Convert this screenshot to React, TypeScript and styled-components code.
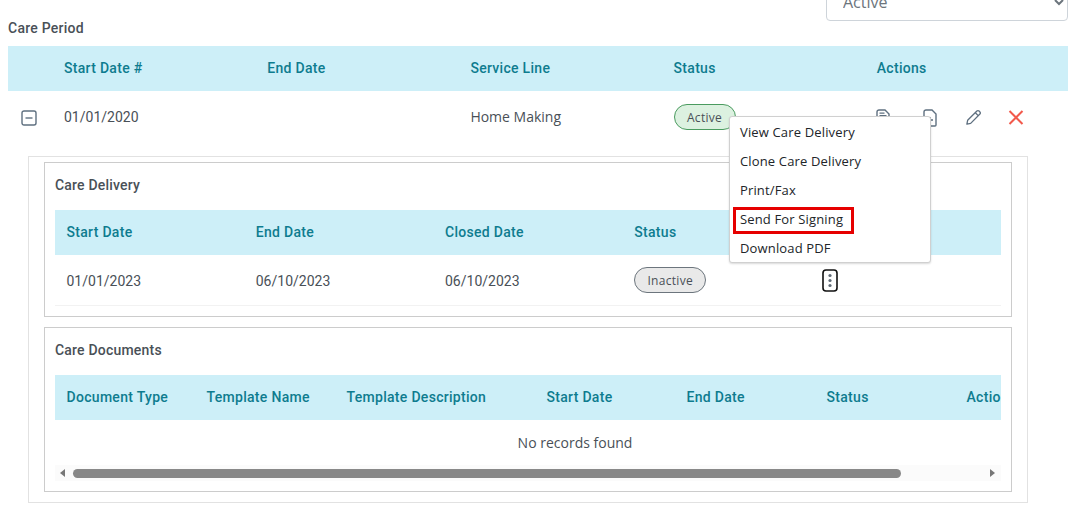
import { styled, createGlobalStyle } from 'styled-components'

const GlobalStyle = createGlobalStyle`
  html, body {
    margin: 0;
    height: 505px;
    overflow: hidden;
    background: #fff;
  }
  * {
    box-sizing: border-box;
  }
`

const Page = styled.div`
  width: 1069px;
  height: 505px;
  overflow: hidden;
  padding-left: 8px;
  font-family: Roboto, sans-serif;
  color: #495057;
`

const FilterBar = styled.div`
  display: flex;
  justify-content: flex-end;
  height: 21px;
  padding-right: 1px;
  align-items: flex-end;
`

const StatusSelect = styled.select`
  width: 242px;
  height: 38px;
  flex: none;
  padding: 0 12px;
  border: 1px solid #ced4da;
  border-radius: 4px;
  background-color: #fff;
  color: #6c757d;
  font-family: "Open Sans", sans-serif;
  font-size: 16px;
`

const PageTitle = styled.div`
  height: 25px;
  font-size: 14px;
  font-weight: 500;
  line-height: 15px;
  letter-spacing: 0.25px;
  color: #495057;
`

const PeriodHead = styled.div`
  display: grid;
  grid-template-columns: 56px repeat(5, 203.2px);
  align-items: center;
  height: 45px;
  width: 1060px;
  background: #cdeff8;
`

const HeadCell = styled.div`
  padding-bottom: 2px;
  font-size: 14px;
  font-weight: 500;
  letter-spacing: 0.3px;
  color: #0e7c8f;
  white-space: nowrap;
`

const PeriodRow = styled.div`
  position: relative;
  display: grid;
  grid-template-columns: 56px repeat(4, 203.2px) 1fr;
  align-items: center;
  height: 52px;
  width: 1060px;
  font-size: 14px;
`

const ExpandCell = styled.div`
  display: flex;
  padding: 2px 0 0 13px;
`

const SansCell = styled.div`
  padding-bottom: 2px;
  font-family: "Open Sans", sans-serif;
`

const Badge = styled.span<{ $active?: boolean }>`
  display: inline-flex;
  align-items: center;
  justify-content: center;
  height: 26px;
  width: ${p => (p.$active ? '62px' : '72px')};
  border-radius: 13px;
  border: 1px solid ${p => (p.$active ? '#4a9b5f' : '#6c757d')};
  background: ${p => (p.$active ? '#dcf1e0' : '#e9e9e9')};
  color: #495057;
  font-family: "Open Sans", sans-serif;
  font-size: 12px;
  letter-spacing: 0.3px;
`

const ActionIcons = styled.div`
  display: grid;
  grid-template-columns: 46px 43px 43px 16px;
  align-items: center;
  margin-left: -1px;
  padding-top: 1px;

  svg {
    display: block;
  }
`

const Menu = styled.ul`
  position: absolute;
  left: 721px;
  top: 25px;
  z-index: 5;
  width: 202px;
  height: 147px;
  margin: 0;
  padding: 1px 0 0;
  list-style: none;
  background: #fff;
  border: 1px solid #d0d0d0;
  border-radius: 3px;
  box-shadow: 0 1px 2px rgba(0, 0, 0, 0.15);
`

const MenuItem = styled.li`
  position: relative;
  height: 29px;
  padding-left: 10px;
  font-family: "Open Sans", sans-serif;
  font-size: 13px;
  line-height: 29px;
  letter-spacing: 0.15px;
  color: #212529;
  white-space: nowrap;
`

const Highlight = styled.span`
  position: absolute;
  left: 3px;
  top: 2px;
  width: 121px;
  height: 27px;
  border: 3px solid #e60000;
`

const OuterBox = styled.div`
  width: 1000px;
  height: 347px;
  margin: 13px 0 0 20px;
  padding: 5px 15px 0;
  border: 1px solid #e2e2e2;
  display: flex;
  flex-direction: column;
  gap: 10px;
`

const Card = styled.section<{ $height: number }>`
  height: ${p => p.$height}px;
  padding: 0 10px;
  border: 1px solid #ccc;
`

const CardTitle = styled.h3`
  height: 47px;
  margin: 0;
  font-size: 14px;
  font-weight: 500;
  line-height: 44px;
  letter-spacing: 0.2px;
  color: #495057;
`

const DeliveryHead = styled.div`
  display: grid;
  grid-template-columns: repeat(5, 189.25px);
  align-items: center;
  height: 45px;
  padding-left: 11.5px;
  background: #cdeff8;
`

const DeliveryRow = styled.div`
  display: grid;
  grid-template-columns: repeat(5, 189.25px);
  align-items: center;
  height: 51px;
  padding-left: 11.5px;
  font-size: 14px;
  border-bottom: 1px solid #f2f2f2;
`

const DateCell = styled.div`
  padding-top: 2px;
`

const KebabCell = styled.div`
  margin-left: -1.5px;

  svg {
    display: block;
  }
`

const ScrollArea = styled.div`
  overflow: hidden;
`

const DocumentsHead = styled.div`
  display: grid;
  grid-template-columns: 140px 140px 200px 140px 140px 140px 140px;
  align-items: center;
  width: 1060px;
  height: 45px;
  padding-left: 11.5px;
  background: #cdeff8;
`

const EmptyRow = styled.div`
  display: flex;
  align-items: center;
  justify-content: center;
  height: 45px;
  padding: 0 0 1px 94px;
  font-family: "Open Sans", sans-serif;
  font-size: 14px;
  color: #495057;
`

const ScrollBar = styled.div`
  display: flex;
  align-items: center;
  justify-content: space-between;
  height: 16px;
  padding: 0 6px 0 5px;
  background: #fbfbfb;
`

const ScrollThumb = styled.div`
  width: 828px;
  height: 9px;
  margin-right: 81px;
  border-radius: 5px;
  background: #888;
`

const Arrow = styled.span<{ $right?: boolean }>`
  width: 0;
  height: 0;
  border-top: 4px solid transparent;
  border-bottom: 4px solid transparent;
  ${p => (p.$right ? 'border-left: 5px solid #777;' : 'border-right: 5px solid #777;')}
`

const MinusIcon = () => (
  <svg width="16" height="16" viewBox="0 0 16 16" fill="none" stroke="#5f7080" strokeWidth="1.4">
    <rect x="1" y="1" width="14" height="14" rx="2" />
    <path d="M4.5 8h7" />
  </svg>
)

const DocIcon = () => (
  <svg width="14" height="18" viewBox="0 0 14 18" fill="none" stroke="#5f7080" strokeWidth="1.4">
    <path d="M1 16V3a2 2 0 0 1 2-2h6l4 4v11a1 1 0 0 1-1 1H2a1 1 0 0 1-1-1z" />
    <path d="M3.5 4.2h5M3.5 6.6h7" strokeWidth="1.2" />
  </svg>
)

const DocPlusIcon = () => (
  <svg width="16" height="18" viewBox="0 0 16 18" fill="none" stroke="#5f7080" strokeWidth="1.4">
    <path d="M2 16V3a2 2 0 0 1 2-2h6l4 4v11a1 1 0 0 1-1 1H3a1 1 0 0 1-1-1z" />
    <path d="M5 11h6M8 8v6" />
  </svg>
)

const PencilIcon = () => (
  <svg width="17" height="17" viewBox="0 0 18 18" fill="none" stroke="#5f7080" strokeWidth="1.4" strokeLinejoin="round">
    <path d="M2 16l.8-4L12.6 2.2a1.6 1.6 0 0 1 2.3 0l.9.9a1.6 1.6 0 0 1 0 2.3L6 15.2z" />
    <path d="M11 4l3 3" />
  </svg>
)

const CloseIcon = () => (
  <svg width="16" height="15" viewBox="0 0 16 15" fill="none" stroke="#f2594b" strokeWidth="2">
    <path d="M1.5 1l13 13M14.5 1l-13 13" />
  </svg>
)

const KebabIcon = () => (
  <svg width="16" height="23" viewBox="0 0 16 23" fill="none">
    <rect x="1" y="1" width="14" height="21" rx="3" stroke="#111" strokeWidth="1.6" />
    <circle cx="8" cy="6.5" r="1.6" fill="#5f6b76" />
    <circle cx="8" cy="11.5" r="1.6" fill="#5f6b76" />
    <circle cx="8" cy="16.5" r="1.6" fill="#5f6b76" />
  </svg>
)

const menuItems = ['View Care Delivery', 'Clone Care Delivery', 'Print/Fax', 'Send For Signing', 'Download PDF']
const deliveryColumns = ['Start Date', 'End Date', 'Closed Date', 'Status', 'Actions']
const documentColumns = ['Document Type', 'Template Name', 'Template Description', 'Start Date', 'End Date', 'Status', 'Actions']

export default function App() {
  return (
    <Page>
      <GlobalStyle />
      <FilterBar>
        <StatusSelect defaultValue="Active">
          <option>Active</option>
          <option>Inactive</option>
        </StatusSelect>
      </FilterBar>
      <PageTitle>Care Period</PageTitle>
      <PeriodHead>
        <div />
        <HeadCell>Start Date #</HeadCell>
        <HeadCell>End Date</HeadCell>
        <HeadCell>Service Line</HeadCell>
        <HeadCell>Status</HeadCell>
        <HeadCell>Actions</HeadCell>
      </PeriodHead>
      <PeriodRow>
        <ExpandCell>
          <MinusIcon />
        </ExpandCell>
        <div>01/01/2020</div>
        <div />
        <SansCell>Home Making</SansCell>
        <div>
          <Badge $active>Active</Badge>
        </div>
        <ActionIcons>
          <DocIcon />
          <DocPlusIcon />
          <PencilIcon />
          <CloseIcon />
        </ActionIcons>
        <Menu>
          {menuItems.map(item => (
            <MenuItem key={item}>
              {item}
              {item === 'Send For Signing' && <Highlight />}
            </MenuItem>
          ))}
        </Menu>
      </PeriodRow>
      <OuterBox>
        <Card $height={155}>
          <CardTitle>Care Delivery</CardTitle>
          <DeliveryHead>
            {deliveryColumns.map(col => (
              <HeadCell key={col}>{col}</HeadCell>
            ))}
          </DeliveryHead>
          <DeliveryRow>
            <DateCell>01/01/2023</DateCell>
            <DateCell>06/10/2023</DateCell>
            <DateCell>06/10/2023</DateCell>
            <div>
              <Badge>Inactive</Badge>
            </div>
            <KebabCell>
              <KebabIcon />
            </KebabCell>
          </DeliveryRow>
        </Card>
        <Card $height={165}>
          <CardTitle>Care Documents</CardTitle>
          <ScrollArea>
            <DocumentsHead>
              {documentColumns.map(col => (
                <HeadCell key={col}>{col}</HeadCell>
              ))}
            </DocumentsHead>
          </ScrollArea>
          <EmptyRow>No records found</EmptyRow>
          <ScrollBar>
            <Arrow />
            <ScrollThumb />
            <Arrow $right />
          </ScrollBar>
        </Card>
      </OuterBox>
    </Page>
  )
}
